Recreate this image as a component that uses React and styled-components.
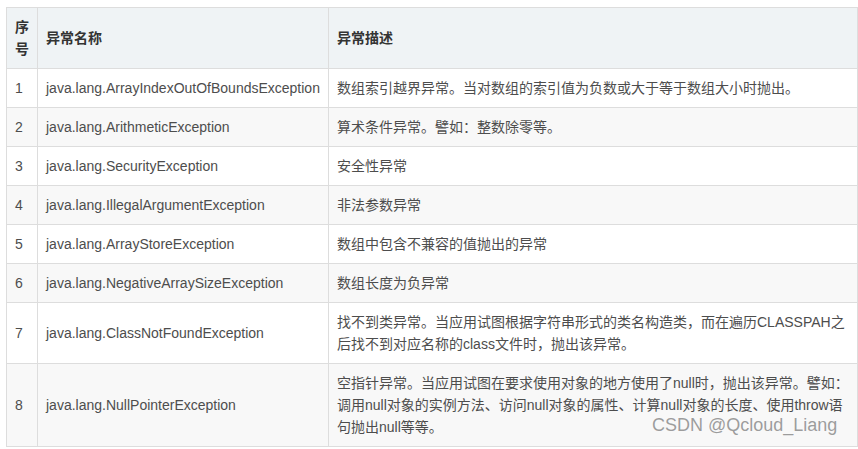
import React from "react";
import styled, { createGlobalStyle } from "styled-components";

const rows = [
  ["1", "java.lang.ArrayIndexOutOfBoundsException", "数组索引越界异常。当对数组的索引值为负数或大于等于数组大小时抛出。"],
  ["2", "java.lang.ArithmeticException", "算术条件异常。譬如：整数除零等。"],
  ["3", "java.lang.SecurityException", "安全性异常"],
  ["4", "java.lang.IllegalArgumentException", "非法参数异常"],
  ["5", "java.lang.ArrayStoreException", "数组中包含不兼容的值抛出的异常"],
  ["6", "java.lang.NegativeArraySizeException", "数组长度为负异常"],
  ["7", "java.lang.ClassNotFoundException", "找不到类异常。当应用试图根据字符串形式的类名构造类，而在遍历CLASSPAH之后找不到对应名称的class文件时，抛出该异常。"],
  ["8", "java.lang.NullPointerException", "空指针异常。当应用试图在要求使用对象的地方使用了null时，抛出该异常。譬如：调用null对象的实例方法、访问null对象的属性、计算null对象的长度、使用throw语句抛出null等等。"],
];

const App = () => {
  return (
    <>
      <GlobalStyle />
      <Page>
        <Table>
          <colgroup>
            <col style={{ width: 31 }} />
            <col style={{ width: 291 }} />
            <col />
          </colgroup>
          <thead>
            <tr>
              <HeadCell>序号</HeadCell>
              <HeadCell>异常名称</HeadCell>
              <HeadCell>异常描述</HeadCell>
            </tr>
          </thead>
          <tbody>
            {rows.map(([no, name, desc], i) => (
              <Row key={no} $striped={i % 2 === 1}>
                <Cell>{no}</Cell>
                <Cell>{name}</Cell>
                <Cell>{desc}</Cell>
              </Row>
            ))}
          </tbody>
        </Table>
        <Watermark>CSDN @Qcloud_Liang</Watermark>
      </Page>
    </>
  );
};

export default App;

const GlobalStyle = createGlobalStyle`
  html, body {
    margin: 0;
    padding: 0;
    background: #fff;
  }
  body {
    font-family: "Liberation Sans", Arial, "Noto Sans CJK SC", sans-serif;
  }
`;

const Page = styled.div`
  position: relative;
  width: 858px;
  height: 449px;
  padding: 7px 0 0 6px;
  box-sizing: border-box;
  overflow: hidden;
`;

const Table = styled.table`
  width: 852px;
  border-collapse: collapse;
  table-layout: fixed;
  font-size: 14px;
  line-height: 22px;
  color: #4d4d4d;
`;

const HeadCell = styled.th`
  background-color: #eff3f5;
  border: 1px solid #dddddd;
  padding: 8px;
  text-align: left;
  font-weight: 700;
  color: #333333;
  vertical-align: middle;
`;

const Row = styled.tr`
  background-color: ${(p) => (p.$striped ? "#f8f8f8" : "#ffffff")};
`;

const Cell = styled.td`
  border: 1px solid #dddddd;
  padding: 8px;
  vertical-align: middle;
  word-break: break-all;
`;

const Watermark = styled.span`
  position: absolute;
  left: 652px;
  top: 415px;
  font-family: "Liberation Sans", Arial, sans-serif;
  font-size: 18px;
  color: rgba(140, 140, 140, 0.85);
  white-space: nowrap;
`;
